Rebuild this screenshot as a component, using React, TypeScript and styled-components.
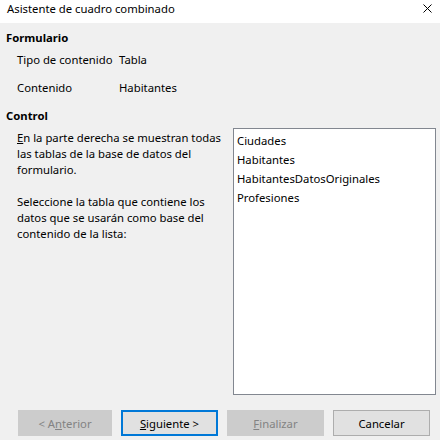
import React from 'react';
import styled, { createGlobalStyle } from 'styled-components';

const GlobalStyle = createGlobalStyle`
  html, body {
    margin: 0;
    padding: 0;
    background: #f0f0f0;
  }
  body {
    font-family: "Noto Sans", "Liberation Sans", sans-serif;
    font-size: 11.3px;
    color: #000;
  }
`;

const Window = styled.div`
  width: 440px;
  height: 440px;
  display: flex;
  flex-direction: column;
  background: #f0f0f0;
  overflow: hidden;
`;

const TitleBar = styled.div`
  height: 23px;
  flex: none;
  background: #fff;
  display: flex;
  align-items: center;
  justify-content: space-between;
  padding: 0 8px 0 7px;
  line-height: 16px;
`;

const TitleText = styled.span`
  margin-top: -6px;
`;

const CloseIcon = styled.svg`
  width: 9px;
  height: 9px;
  margin-top: -7px;
`;

const Body = styled.div`
  flex: 1;
  display: flex;
  flex-direction: column;
  padding: 7px 4px 0 6px;
`;

const SectionTitle = styled.div<{ top?: number }>`
  font-weight: bold;
  line-height: 16px;
  height: 16px;
  margin-top: ${p => p.top ?? 0}px;
`;

const FieldRow = styled.div<{ top: number }>`
  display: flex;
  padding-left: 11px;
  margin-top: ${p => p.top}px;
  line-height: 16px;
  height: 16px;
`;

const FieldLabel = styled.span`
  flex: none;
  width: 102px;
`;

const ControlArea = styled.div`
  display: flex;
  justify-content: space-between;
  margin-top: 4px;
`;

const HelpText = styled.div`
  padding: 2px 0 0 11px;
  line-height: 16px;
  white-space: nowrap;
`;

const Para = styled.p`
  margin: 0 0 16px 0;
`;

const ListBox = styled.div`
  flex: none;
  width: 203px;
  height: 267px;
  box-sizing: border-box;
  background: #fff;
  border: 1px solid #828790;
  padding: 2px 0 0 3px;
`;

const ListItem = styled.div`
  line-height: 19px;
  height: 19px;
`;

const ButtonBar = styled.div`
  display: flex;
  gap: 9px;
  padding-left: 12px;
  margin-top: 15px;
`;

const Button = styled.button<{ variant: 'disabled' | 'default' | 'normal'; w: number }>`
  width: ${p => p.w}px;
  height: 26px;
  box-sizing: border-box;
  font: inherit;
  padding: 0;
  ${p =>
    p.variant === 'disabled'
      ? `
    background: #cccccc;
    border: 1px solid #cccccc;
    color: #838383;
  `
      : p.variant === 'default'
      ? `
    background: #e1e1e1;
    border: 2px solid #0078d7;
    color: #000;
  `
      : `
    background: #e1e1e1;
    border: 1px solid #adadad;
    color: #000;
  `}
`;

const items = ['Ciudades', 'Habitantes', 'HabitantesDatosOriginales', 'Profesiones'];

export default function App() {
  return (
    <Window>
      <GlobalStyle />
      <TitleBar>
        <TitleText>Asistente de cuadro combinado</TitleText>
        <CloseIcon viewBox="0 0 9 9">
          <path d="M0.5 0.5 L8.5 8.5 M8.5 0.5 L0.5 8.5" stroke="#000" strokeWidth="1" fill="none" />
        </CloseIcon>
      </TitleBar>
      <Body>
        <SectionTitle>Formulario</SectionTitle>
        <FieldRow top={6}>
          <FieldLabel>Tipo de contenido</FieldLabel>
          <span>Tabla</span>
        </FieldRow>
        <FieldRow top={12}>
          <FieldLabel>Contenido</FieldLabel>
          <span>Habitantes</span>
        </FieldRow>
        <SectionTitle top={12}>Control</SectionTitle>
        <ControlArea>
          <HelpText>
            <Para>
              <u>E</u>n la parte derecha se muestran todas
              <br />
              las tablas de la base de datos del
              <br />
              formulario.
            </Para>
            <Para>
              Seleccione la tabla que contiene los
              <br />
              datos que se usarán como base del
              <br />
              contenido de la lista:
            </Para>
          </HelpText>
          <ListBox>
            {items.map(item => (
              <ListItem key={item}>{item}</ListItem>
            ))}
          </ListBox>
        </ControlArea>
        <ButtonBar>
          <Button variant="disabled" w={94} disabled>
            &lt; A<u>n</u>terior
          </Button>
          <Button variant="default" w={97}>
            <u>S</u>iguiente &gt;
          </Button>
          <Button variant="disabled" w={97} disabled>
            <u>F</u>inalizar
          </Button>
          <Button variant="normal" w={97}>
            Cancelar
          </Button>
        </ButtonBar>
      </Body>
    </Window>
  );
}
